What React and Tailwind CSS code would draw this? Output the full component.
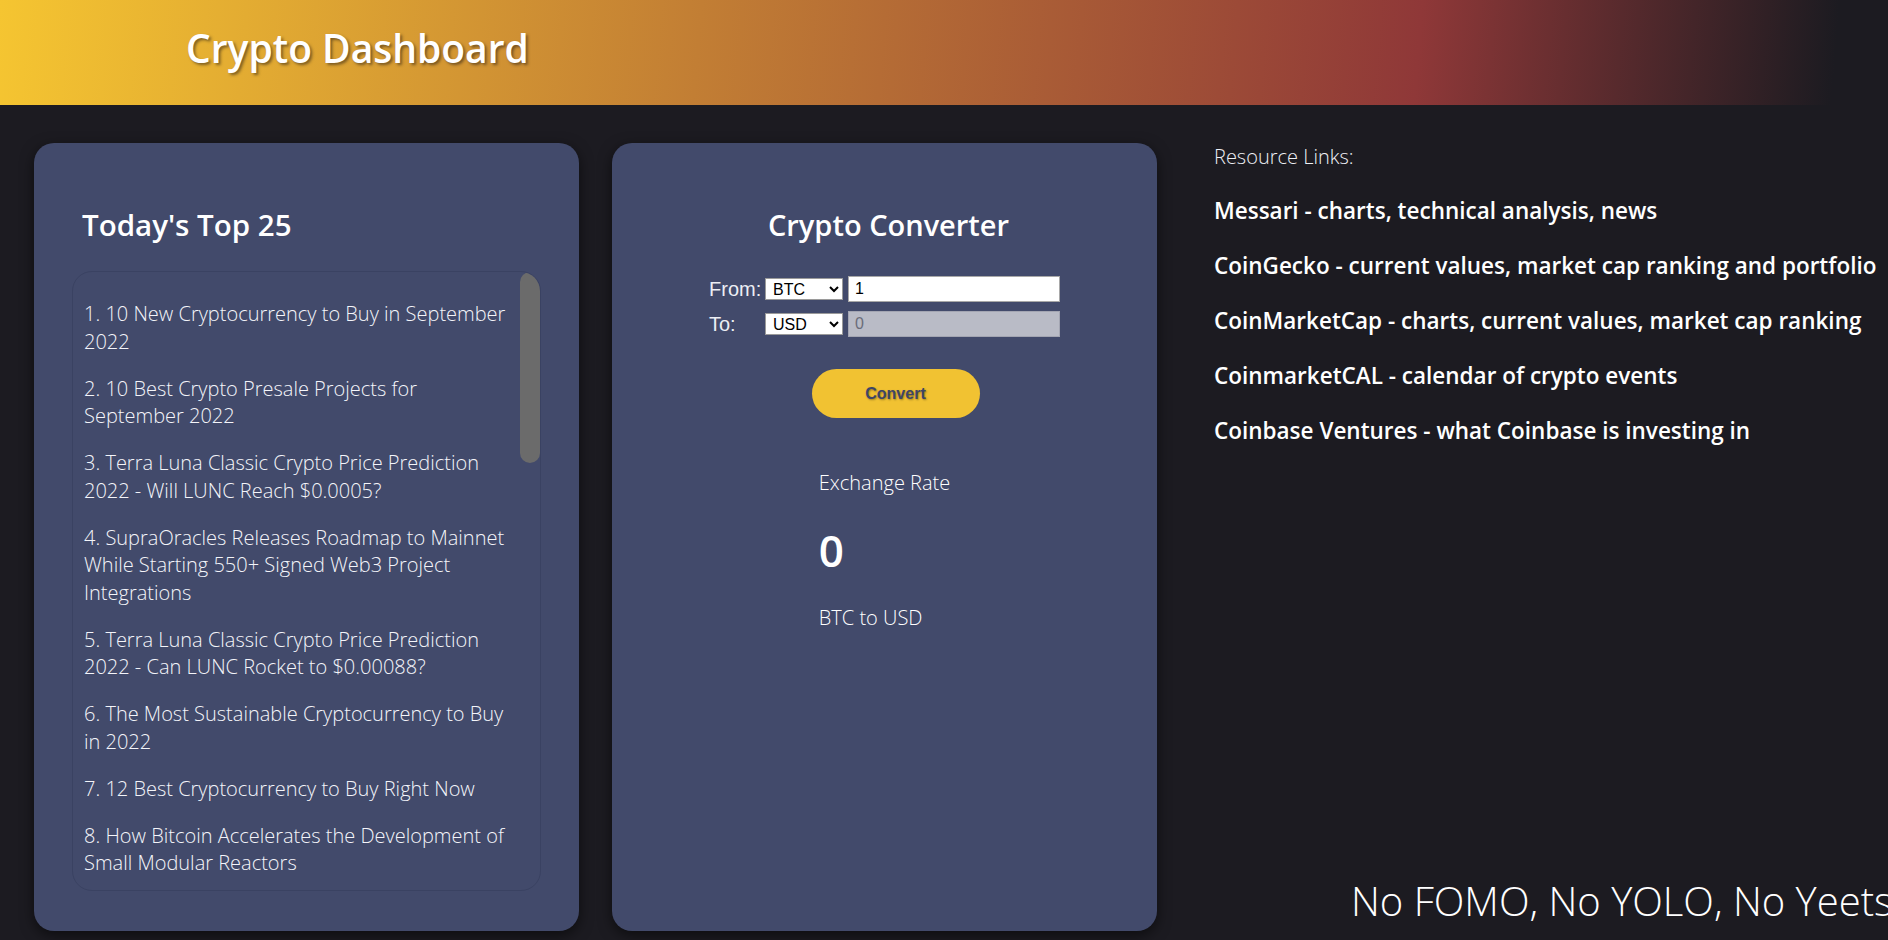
import React from "react";

const headlines = [
  "10 New Cryptocurrency to Buy in September 2022",
  "10 Best Crypto Presale Projects for September 2022",
  "Terra Luna Classic Crypto Price Prediction 2022 - Will LUNC Reach $0.0005?",
  "SupraOracles Releases Roadmap to Mainnet While Starting 550+ Signed Web3 Project Integrations",
  "Terra Luna Classic Crypto Price Prediction 2022 - Can LUNC Rocket to $0.00088?",
  "The Most Sustainable Cryptocurrency to Buy in 2022",
  "12 Best Cryptocurrency to Buy Right Now",
  "How Bitcoin Accelerates the Development of Small Modular Reactors",
  "Ethereum Merge: What Investors Need to Know",
  "Bitcoin Price Holds Above $19,000 as Market Awaits Fed Decision",
  "Top 5 Altcoins to Watch This Week",
  "Cardano Vasil Hard Fork Date Confirmed",
  "Is Solana a Good Investment in 2022?",
  "Crypto Market Update: BTC and ETH Trade Sideways",
  "How to Stake Ethereum After the Merge",
  "Dogecoin Price Prediction 2022 - Will DOGE Reach $1?",
  "Binance Launches New Crypto Card in Latin America",
  "7 Best Crypto Wallets for Beginners",
  "Polygon Partners with Major Brands for Web3 Expansion",
  "XRP Price Analysis: Ripple Lawsuit Nears Conclusion",
  "What Is a Crypto Presale and How Does It Work?",
  "Shiba Inu Burn Rate Surges as SHIB Rallies",
  "Chainlink Staking Set to Launch Later This Year",
  "NFT Sales Volume Drops to Yearly Low",
  "Best Crypto Exchanges for Low Fees in 2022",
];

const resources = [
  "Messari - charts, technical analysis, news",
  "CoinGecko - current values, market cap ranking and portfolio",
  "CoinMarketCap - charts, current values, market cap ranking",
  "CoinmarketCAL - calendar of crypto events",
  "Coinbase Ventures - what Coinbase is investing in",
];

const NewsFeed = () => (
  <section className="w-[545px] h-[788px] shrink-0 rounded-[20px] bg-[#424a6b] shadow-[0_4px_14px_rgba(0,0,0,0.55)] px-[38px] pt-[63px]">
    <h2 className="pl-[10px] text-[29.5px] leading-[38px] font-semibold mb-[27px]">
      Today's Top 25
    </h2>
    <div className="h-[620px] flex rounded-[20px] border border-[#3a4262] overflow-hidden">
      {/* list area, scrolled to top */}
      <div className="flex-1 min-w-0 overflow-hidden pl-[11px] pr-[12px] pt-[28px]">
        <ul className="flex flex-col gap-[19.5px]">
          {headlines.map((title, i) => (
            <li key={i} className="text-[20px] leading-[27.5px] font-light text-[#f4f5fa]">
              {i + 1}. {title}
            </li>
          ))}
        </ul>
      </div>
      {/* scrollbar track */}
      <div className="w-[20px] shrink-0">
        <div className="h-[191px] w-[20px] rounded-full bg-[#6b6b6b]" />
      </div>
    </div>
  </section>
);

const Converter = () => (
  <section className="w-[545px] h-[788px] shrink-0 rounded-[20px] bg-[#424a6b] shadow-[0_4px_14px_rgba(0,0,0,0.55)] pt-[63px] flex flex-col items-center">
    <h2 className="ml-[8px] text-[29px] leading-[38px] font-semibold mb-[32px]">
      Crypto Converter
    </h2>

    <div className="flex flex-col gap-[9px] font-['Liberation_Sans',Arial,sans-serif]">
      <div className="flex items-center h-[26px]">
        <label className="w-[56px] text-[20px] text-[#eceef4]">From:</label>
        <select className="w-[78px] h-[22px] bg-white text-black text-[16px] border border-[#9a9a9a] pl-[3px]" defaultValue="BTC">
          <option>BTC</option>
          <option>ETH</option>
        </select>
        <input
          className="ml-[5px] w-[212px] h-[26px] bg-white text-black text-[16px] border border-[#a8a8a8] px-[6px]"
          defaultValue="1"
        />
      </div>
      <div className="flex items-center h-[26px]">
        <label className="w-[56px] text-[20px] text-[#eceef4]">To:</label>
        <select className="w-[78px] h-[22px] bg-white text-black text-[16px] border border-[#9a9a9a] pl-[3px]" defaultValue="USD">
          <option>USD</option>
          <option>EUR</option>
        </select>
        <input
          className="ml-[5px] w-[212px] h-[26px] bg-[#b9bbc6] text-[#6b6d7a] text-[16px] border border-[#a3a5b2] px-[6px]"
          value="0"
          disabled
          readOnly
        />
      </div>
    </div>

    <button className="mt-[32px] ml-[22px] w-[168px] h-[49px] rounded-full bg-[#f1c232] font-['Liberation_Sans',Arial,sans-serif] text-[16px] font-bold text-[#3e4566] [text-shadow:1px_1px_2px_rgba(0,0,0,0.35)]">
      Convert
    </button>

    <div className="mt-[51px] flex flex-col text-left">
      <p className="text-[20px] leading-[27.5px] font-light">Exchange Rate</p>
      <p className="mt-[27px] text-[44px] leading-[53px] font-semibold">0</p>
      <p className="mt-[27px] text-[20px] leading-[27.5px] font-light">BTC to USD</p>
    </div>
  </section>
);

export default function App() {
  return (
    <div className="h-screen w-full overflow-hidden bg-[#1c1b21] font-['Open_Sans',sans-serif] text-white">
      <header className="h-[105px] flex items-center pl-[186px] pb-[9px] bg-[linear-gradient(95deg,#f5c531_0%,#c27e34_37%,#8f3838_75%,#1c1b21_97%)]">
        <h1 className="text-[39px] leading-[48px] font-semibold [text-shadow:2px_2px_3px_rgba(40,30,20,0.55)]">
          Crypto Dashboard
        </h1>
      </header>

      <main className="flex pl-[34px] pt-[38px] gap-[33px]">
        <NewsFeed />
        <Converter />

        <aside className="ml-[24px] h-[788px] flex flex-col min-w-0">
          <p className="mt-[1px] text-[20px] leading-[26px] font-light text-[#eef0f5]">Resource Links:</p>
          <ul className="mt-[26px] flex flex-col gap-[25px]">
            {resources.map((r) => (
              <li key={r}>
                <a className="text-[22.5px] leading-[30px] font-semibold text-white whitespace-nowrap">{r}</a>
              </li>
            ))}
          </ul>
          <p className="mt-auto mb-[6px] ml-[137px] text-[40px] leading-[48px] font-light whitespace-nowrap">
            No FOMO, No YOLO, No Yeets
          </p>
        </aside>
      </main>
    </div>
  );
}
